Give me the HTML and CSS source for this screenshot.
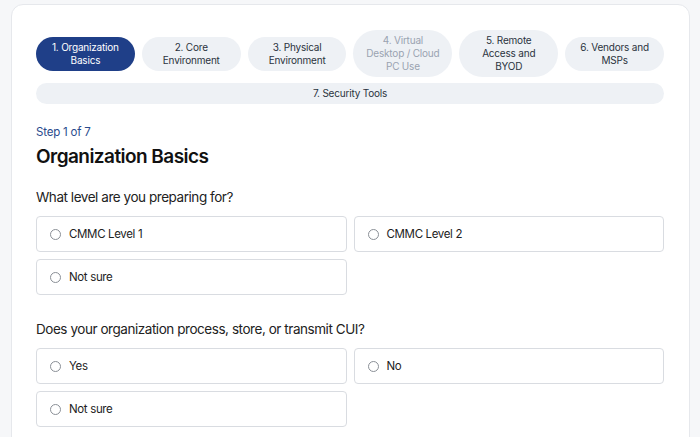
FILE: index.html
```html
<!DOCTYPE html>
<html lang="en">
<head>
    <meta charset="UTF-8">
    <meta name="viewport" content="width=device-width, initial-scale=1.0">
    <title>CMMC Readiness</title>
    <link rel="stylesheet" href="styles.css">
</head>
<body>
    <div class="card">
        <div class="steps">
            <button class="step active">1. Organization Basics</button>
            <button class="step">2. Core Environment</button>
            <button class="step">3. Physical Environment</button>
            <button class="step disabled">4. Virtual Desktop / Cloud PC Use</button>
            <button class="step">5. Remote Access and BYOD</button>
            <button class="step">6. Vendors and MSPs</button>
            <button class="step">7. Security Tools</button>
        </div>

        <div class="step-count">Step 1 of 7</div>
        <h1>Organization Basics</h1>

        <div class="question">
            <p class="q-title">What level are you preparing for?</p>
            <div class="options">
                <label class="option"><span class="radio"></span>CMMC Level 1</label>
                <label class="option"><span class="radio"></span>CMMC Level 2</label>
                <label class="option"><span class="radio"></span>Not sure</label>
            </div>
        </div>

        <div class="question">
            <p class="q-title">Does your organization process, store, or transmit CUI?</p>
            <div class="options">
                <label class="option"><span class="radio"></span>Yes</label>
                <label class="option"><span class="radio"></span>No</label>
                <label class="option"><span class="radio"></span>Not sure</label>
            </div>
        </div>
    </div>
</body>
</html>
```

FILE: styles.css
```css
body {
    font-family: Inter, "Noto Sans", sans-serif;
    background-color: #f6f7f9;
    margin: 0;
    padding: 4px 10px 0 11px;
    color: #1f2328;
}

.card {
    background-color: #fff;
    border: 1px solid #e6e8ec;
    border-radius: 12px;
    padding: 25px 25px 20px 24px;
    min-height: 500px;
}

.steps {
    display: flex;
    flex-wrap: wrap;
    align-items: center;
    gap: 6px 7px;
}

.step {
    flex: 1 1 90px;
    box-sizing: border-box;
    font-family: Inter, "Noto Sans", sans-serif;
    font-size: 10px;
    letter-spacing: -0.2px;
    line-height: 13px;
    padding: 4px 12px;
    border: none;
    border-radius: 999px;
    background-color: #eef1f5;
    color: #2b3340;
    text-align: center;
    cursor: pointer;
}

.step.active {
    background-color: #1f3f88;
    color: #fff;
}

.step.disabled {
    color: #9aa3b1;
}

.step-count {
    margin-top: 20px;
    font-size: 11.5px;
    letter-spacing: -0.2px;
    line-height: 16px;
    color: #2a4b8d;
}

h1 {
    margin: 5px 0 0 0;
    font-size: 19px;
    font-weight: 600;
    letter-spacing: -0.55px;
    line-height: 24px;
    color: #111;
}

.question {
    margin-top: 19px;
}

.question + .question {
    margin-top: 25px;
}

.q-title {
    margin: 0 0 10px 0;
    font-size: 13.5px;
    letter-spacing: -0.45px;
    line-height: 18px;
    color: #222;
}

.options {
    display: grid;
    grid-template-columns: 1fr 1fr;
    gap: 7px;
}

.option {
    display: flex;
    align-items: center;
    height: 34px;
    padding: 0 13px;
    border: 1px solid #d9dce1;
    border-radius: 4px;
    font-size: 11.5px;
    letter-spacing: -0.35px;
    color: #222;
    cursor: pointer;
}

.radio {
    width: 9px;
    height: 9px;
    border: 1px solid #8a8f96;
    border-radius: 50%;
    margin-right: 8px;
}
```
